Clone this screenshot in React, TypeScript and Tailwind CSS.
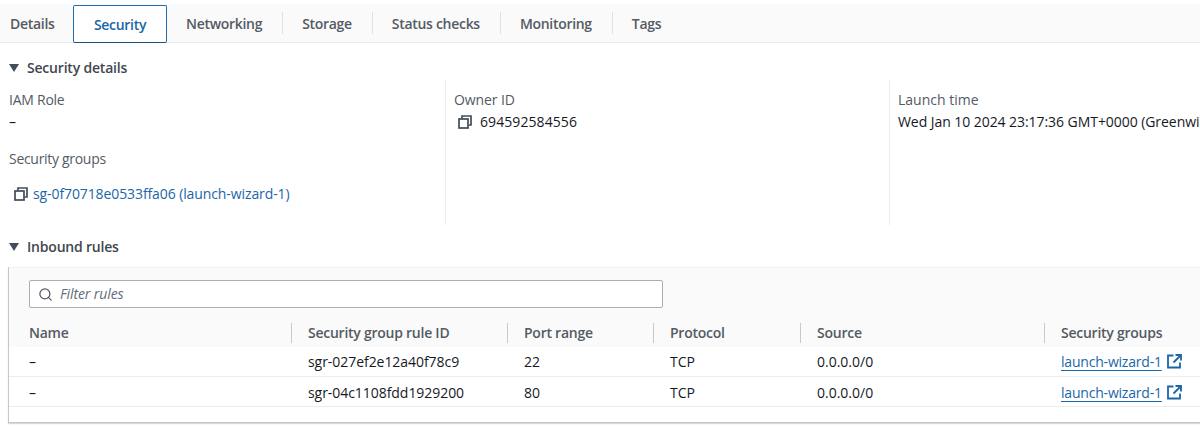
import { Search } from 'lucide-react';

const tabs = ['Details', 'Security', 'Networking', 'Storage', 'Status checks', 'Monitoring', 'Tags'];

const rules = [
  { id: 'sgr-027ef2e12a40f78c9', port: '22' },
  { id: 'sgr-04c1108fdd1929200', port: '80' },
];

// shared column template for the rules table (header + rows)
const cols = 'grid grid-cols-[282px_216px_146px_147px_244px_1fr]';

function CopyIcon() {
  return (
    <svg width="14" height="14" viewBox="0 0 14 14" fill="none" stroke="#414d5c" strokeWidth="1.7" className="shrink-0">
      <rect x="1" y="4" width="9" height="9" />
      <path d="M4 3.5V1h9v9h-2.5" />
    </svg>
  );
}

function ExternalIcon() {
  return (
    <svg width="15" height="15" viewBox="0 0 15 15" fill="none" stroke="#1b66a8" strokeWidth="1.8" className="shrink-0">
      <path d="M6.5 1.5H1v12h12V8.5" />
      <path d="M8.5 1H14v5.5M14 1L6.5 8.5" />
    </svg>
  );
}

function Caret() {
  return (
    <svg width="10" height="8" viewBox="0 0 10 8" className="shrink-0">
      <path d="M0 0h10L5 8z" fill="#414d5c" />
    </svg>
  );
}

function Th({ label, divider = true }: { label: string; divider?: boolean }) {
  return (
    <div className="flex items-center h-[30px]">
      {divider && <div className="w-px h-5 bg-[#c6c9cc] mr-[16px]" />}
      <span className={`font-semibold tracking-[-0.25px] text-[#545b64] ${divider ? '' : 'pl-[20px]'}`}>{label}</span>
    </div>
  );
}

export default function App() {
  return (
    <div className="w-[1200px] h-[428px] overflow-hidden bg-white pt-[4px] text-[14px] leading-5 text-[#16191f] font-['Open_Sans','Noto_Sans',sans-serif]">
      {/* Tabs */}
      <div className="flex h-[39px] bg-[#fafafa] border-b border-[#eaeded] pl-[10px] tracking-[-0.3px]">
        <div className="flex items-center pt-px font-semibold text-[#545b64] w-[63px]">Details</div>
        <div className="flex items-center justify-center pt-px w-[94px] h-[38px] mt-px bg-white border-[1.5px] border-[#1f6fb0] border-b-[#1c4f7c] rounded-[2px] font-semibold text-[#1b66a8]">
          Security
        </div>
        {tabs.slice(2).map((tab, i) => (
          <div key={tab} className="flex items-center">
            <span className="font-semibold text-[#545b64] pt-px pl-[19px] pr-[20px]">{tab}</span>
            {i < 4 && <div className="w-px h-[22px] bg-[#dfe1e3]" />}
          </div>
        ))}
      </div>

      {/* Security details */}
      <div className="flex items-center gap-[8px] pl-[9px] mt-[15px] h-5">
        <Caret />
        <span className="font-semibold tracking-[-0.2px] text-[#414750]">Security details</span>
      </div>

      <div className="grid grid-cols-[437px_444px_1fr] ml-[8px] mt-[2px] h-[145px]">
        <div className="pl-px pt-[10px]">
          <div className="text-[#545b64] tracking-[-0.25px]">IAM Role</div>
          <div className="mt-[2px]">–</div>
          <div className="text-[#545b64] tracking-[-0.3px] mt-[17px]">Security groups</div>
          <div className="flex items-center gap-[5px] mt-[15px] pl-[5px]">
            <CopyIcon />
            <a className="text-[#1b66a8] tracking-[-0.1px]">sg-0f70718e0533ffa06 (launch-wizard-1)</a>
          </div>
        </div>
        <div className="border-l border-[#eaeded] pl-[8px] pt-[10px]">
          <div className="text-[#545b64] tracking-[-0.1px]">Owner ID</div>
          <div className="flex items-center gap-[8px] mt-[2px] pl-[4px]">
            <CopyIcon />
            <span className="tracking-[0.08px]">694592584556</span>
          </div>
        </div>
        <div className="border-l border-[#eaeded] pl-[8px] pt-[10px] overflow-hidden">
          <div className="text-[#545b64]">Launch time</div>
          <div className="mt-[2px] whitespace-nowrap tracking-[-0.06px]">Wed Jan 10 2024 23:17:36 GMT+0000 (Greenwich Mean Time)</div>
        </div>
      </div>

      {/* Inbound rules */}
      <div className="flex items-center gap-[8px] pl-[9px] mt-[12px] h-5">
        <Caret />
        <span className="font-semibold tracking-[-0.2px] text-[#414750]">Inbound rules</span>
      </div>

      <div className="ml-[8px] mt-[10px] h-[156px] bg-white border-l border-b border-[#c4c6c8] shadow-[0_1px_1px_rgba(0,0,0,0.15)]">
        <div className="h-[80px] bg-[#fafafa] border-t border-[#f0f1f1]">
          <div className="pl-[20px] pt-[12px] pb-[10px]">
            <div className="flex items-center gap-[7px] w-[634px] h-[28px] pl-[8px] bg-white border border-[#a9aeb3] rounded-[2px]">
              <Search size={15} strokeWidth={2} color="#545b64" />
              <span className="italic text-[#5f6b7a] tracking-[-0.1px]">Filter rules</span>
            </div>
          </div>
          <div className={cols}>
            <Th label="Name" divider={false} />
            <Th label="Security group rule ID" />
            <Th label="Port range" />
            <Th label="Protocol" />
            <Th label="Source" />
            <Th label="Security groups" />
          </div>
        </div>
        {rules.map((rule, i) => (
          <div key={rule.id} className={`${cols} h-[30px] items-center border-b border-[#eaeded] ${i === 1 ? 'pt-[2px]' : ''}`}>
            <div className="pl-[20px]">–</div>
            <div className="pl-[17px] tracking-[-0.05px]">{rule.id}</div>
            <div className="pl-[17px]">{rule.port}</div>
            <div className="pl-[17px]">TCP</div>
            <div className="pl-[17px]">0.0.0.0/0</div>
            <div className="pl-[17px] flex items-center">
              <a className="text-[#1b66a8] tracking-[-0.2px] underline underline-offset-[3px] pr-[5px]">launch-wizard-1</a>
              <ExternalIcon />
            </div>
          </div>
        ))}
      </div>
    </div>
  );
}
